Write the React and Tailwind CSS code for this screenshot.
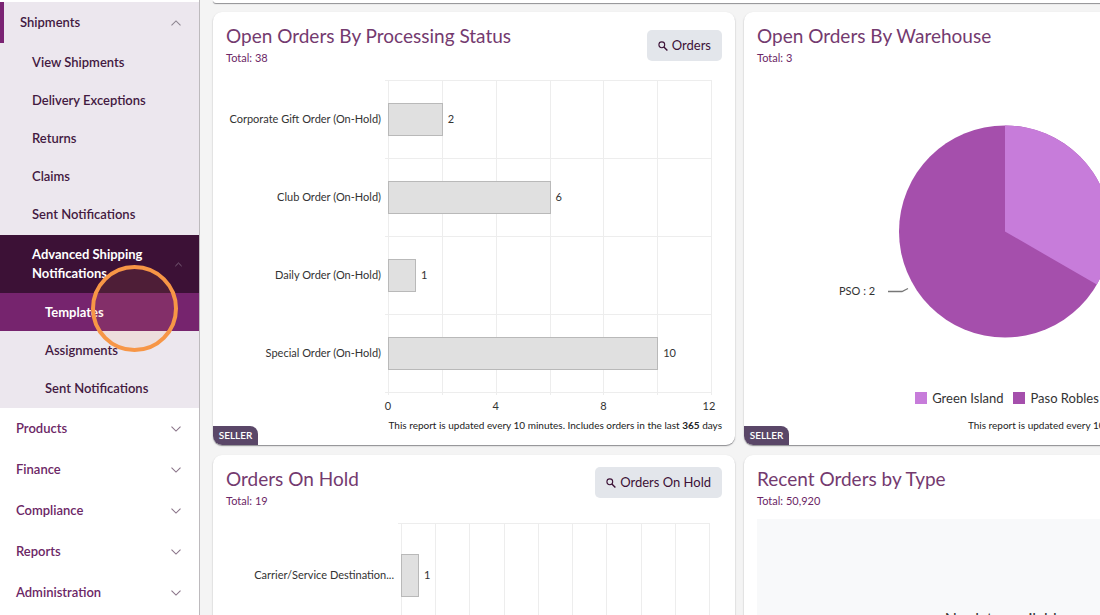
import React from "react";

const SHIPMENT_LINKS = [
  "View Shipments",
  "Delivery Exceptions",
  "Returns",
  "Claims",
  "Sent Notifications",
];

const SECTIONS = ["Products", "Finance", "Compliance", "Reports", "Administration"];

function Chevron({ up = false, small = false }) {
  return (
    <svg
      viewBox="0 0 10 6"
      aria-hidden="true"
      className={small ? "w-[7px] h-[5px] shrink-0" : "w-[10px] h-[6px] shrink-0"}
      fill="none"
      stroke="currentColor"
      strokeWidth="1.1"
    >
      <path d={up ? "M0.5 5.3L5 0.9L9.5 5.3" : "M0.5 0.7L5 5.1L9.5 0.7"} />
    </svg>
  );
}

function SearchIcon() {
  return (
    <svg viewBox="0 0 10 10" aria-hidden="true" className="w-[10px] h-[10px] mt-[1px]" fill="none" stroke="currentColor">
      <circle cx="3.8" cy="3.8" r="2.9" strokeWidth="1.1" />
      <path d="M5.9 5.9L9.4 9.4" strokeWidth="1.4" />
    </svg>
  );
}

function Sidebar() {
  return (
    <nav
      aria-label="Main"
      className="relative w-[200px] shrink-0 border-r border-[#bdbabd] bg-white pt-[2px] text-[13px] leading-[19px] font-semibold"
    >
      <div className="bg-[#ece7ee] pb-px text-[#431941]">
        <button
          type="button"
          aria-expanded="true"
          className="flex h-[41px] w-full items-center justify-between border-l-4 border-[#7a2373] pl-4 pr-[18px] text-left"
        >
          Shipments
          <span className="text-[#8d8590]"><Chevron up /></span>
        </button>
        <ul className="pb-[2px]">
          {SHIPMENT_LINKS.map((label) => (
            <li key={label}>
              <a href="#" className="flex h-[38px] items-center pl-8">{label}</a>
            </li>
          ))}
        </ul>
        <button
          type="button"
          aria-expanded="true"
          className="flex h-[58px] w-full items-center justify-between bg-[#3c1136] pl-8 pr-[17px] text-left font-bold text-white"
        >
          <span>Advanced Shipping<br />Notifications</span>
          <span className="text-[#917b90]"><Chevron up small /></span>
        </button>
        <a href="#" aria-current="page" className="flex h-[38px] items-center bg-[#76246e] pl-[45px] font-bold text-white">
          Templates
        </a>
        <a href="#" className="flex h-[38px] items-center pl-[45px]">Assignments</a>
        <a href="#" className="flex h-[38px] items-center pl-[45px]">Sent Notifications</a>
      </div>
      <div className="text-[#6c2766]">
        {SECTIONS.map((label) => (
          <button
            key={label}
            type="button"
            aria-expanded="false"
            className="flex h-[41px] w-full items-center justify-between pl-4 pr-[18px] text-left"
          >
            {label}
            <span className="text-[#8a7489]"><Chevron /></span>
          </button>
        ))}
      </div>
      <div
        aria-hidden="true"
        className="pointer-events-none absolute left-[91px] top-[265px] size-[87px] rounded-full border-4 border-[#f79646] bg-[#f79646]/10"
      />
    </nav>
  );
}

function Card({ title, total, action, actionClass = "", badge = false, footer, children }) {
  return (
    <section className="relative flex flex-col rounded-[9px] bg-white px-[13px] py-3 shadow-[0_1px_1px_#8f8f93,0_1px_3px_#00000014]">
      <header className="flex items-start justify-between text-[#6c2766]">
        <div>
          <h2 className="text-[19px] leading-6 font-normal text-[#743a6f]">{title}</h2>
          <p className="mt-[2px] text-[11px] leading-4">Total: {total}</p>
        </div>
        {action && (
          <div className={actionClass}>
            <button type="button" className="flex h-[31px] items-center gap-1 rounded-[5px] bg-[#e3e6eb] px-[11px] text-[13px] text-[#3c1136]">
              <SearchIcon />
              {action}
            </button>
          </div>
        )}
      </header>
      {children}
      {footer && <p className="text-right text-[10px] leading-4 text-[#222] whitespace-nowrap">{footer}</p>}
      {badge && (
        <span className="absolute bottom-0 left-0 flex h-[19px] w-[45px] items-center justify-center rounded-tr-[8px] rounded-bl-[9px] bg-[#5a4768] text-[10px] font-semibold text-white">
          SELLER
        </span>
      )}
    </section>
  );
}

function BarChart({ rows, axisX, plotWidth, columns, rowHeight, barHeight, max, ticks, top, height, label }) {
  const step = plotWidth / columns;
  const unit = plotWidth / max;
  const right = axisX + plotWidth;
  const bottom = top + rowHeight * rows.length;
  return (
    <svg role="img" aria-label={label} width="496" height={height} className="block overflow-hidden" fontSize="11" fill="#333">
      <g stroke="#ededed" strokeWidth="1">
        {Array.from({ length: columns + 1 }, (_, i) => (
          <line key={i} x1={Math.round(axisX + i * step) + 0.5} x2={Math.round(axisX + i * step) + 0.5} y1={top} y2={bottom + 3} />
        ))}
        {Array.from({ length: rows.length + 1 }, (_, i) => (
          <line key={i} x1={axisX - 3} x2={right} y1={top + i * rowHeight + 0.5} y2={top + i * rowHeight + 0.5} />
        ))}
      </g>
      {rows.map(({ name, value }, i) => {
        const middle = top + rowHeight * (i + 0.5);
        return (
          <g key={name}>
            <text x={axisX - 7} y={middle + 4} textAnchor="end">{name}</text>
            <rect
              x={axisX + 0.5}
              y={Math.round(middle - barHeight / 2) + 0.5}
              width={Math.round(value * unit)}
              height={barHeight}
              fill="#e0e0e0"
              stroke="#b9b9b9"
            />
            <text x={axisX + value * unit + 6} y={middle + 4}>{value}</text>
          </g>
        );
      })}
      {ticks.map((tick) => (
        <text key={tick} x={axisX + tick * unit - (tick === max ? 2 : 0)} y={bottom + 18} textAnchor="middle">{tick}</text>
      ))}
    </svg>
  );
}

function WarehousePie() {
  return (
    <div className="flex flex-col items-center">
      <svg role="img" aria-label="Open orders by warehouse" width="496" height="322" className="block">
        <circle cx="248" cy="165.5" r="106" fill="#a54fac" />
        <path d="M248 165.5V59.5A106 106 0 0 1 339.8 218.5Z" fill="#c77cda" />
        <path d="M131 225.5H145L151 222.5" fill="none" stroke="#777" strokeWidth="1.3" />
        <text x="82" y="229" fontSize="11" fill="#333">PSO : 2</text>
      </svg>
      <ul className="flex h-5 items-center gap-[10px] pl-1 text-[13px] leading-5 text-[#333]">
        <li className="flex items-center gap-[5px]"><i className="size-3 bg-[#c77cda]" />Green Island</li>
        <li className="flex items-center gap-[5px]"><i className="size-3 bg-[#a54fac]" />Paso Robles</li>
      </ul>
    </div>
  );
}

export default function App() {
  return (
    <div className="flex h-screen overflow-hidden bg-[#f4f4f4] font-['Lato',sans-serif]">
      <Sidebar />
      <main className="min-w-0 flex-1 overflow-hidden pl-[13px]">
        <div className="grid min-w-[1053px] grid-cols-2 gap-x-[9px]">
          <div className="col-span-2 mb-[9px] h-[3px] rounded-b-[9px] bg-white shadow-[0_1px_1px_#8f8f93]" />
          <div className="mb-[10px] grid">
            <Card
              badge
              title="Open Orders By Processing Status"
              total="38"
              action="Orders"
              actionClass="pt-[6px]"
              footer={<>This report is updated every 10 minutes. Includes orders in the last <b>365</b> days</>}
            >
              <BarChart
                label="Open orders by processing status"
                rows={[
                  { name: "Corporate Gift Order (On-Hold)", value: 2 },
                  { name: "Club Order (On-Hold)", value: 6 },
                  { name: "Daily Order (On-Hold)", value: 1 },
                  { name: "Special Order (On-Hold)", value: 10 },
                ]}
                axisX={162}
                plotWidth={323}
                columns={6}
                max={12}
                rowHeight={78}
                barHeight={32}
                ticks={[0, 4, 8, 12]}
                top={14}
                height={351}
              />
            </Card>
          </div>
          <div className="mb-[10px] grid">
            <Card
              badge
              title="Open Orders By Warehouse"
              total="3"
              footer="This report is updated every 10 minutes. Includes all open orders."
            >
              <WarehousePie />
              <div className="h-[9px]" />
            </Card>
          </div>
          <Card title="Orders On Hold" total="19" action="Orders On Hold">
            <BarChart
              label="Orders on hold"
              rows={[
                { name: "Carrier/Service Destination...", value: 1 },
              ]}
              axisX={175}
              plotWidth={308}
              columns={9}
              max={18}
              rowHeight={104}
              barHeight={42}
              ticks={[]}
              top={14}
              height={340}
            />
          </Card>
          <Card title="Recent Orders by Type" total="50,920">
            <div className="mt-[10px] flex h-[198px] items-center justify-center bg-[#f8f9fa] text-[16px] text-[#333]">
              No data available
            </div>
          </Card>
        </div>
      </main>
    </div>
  );
}
